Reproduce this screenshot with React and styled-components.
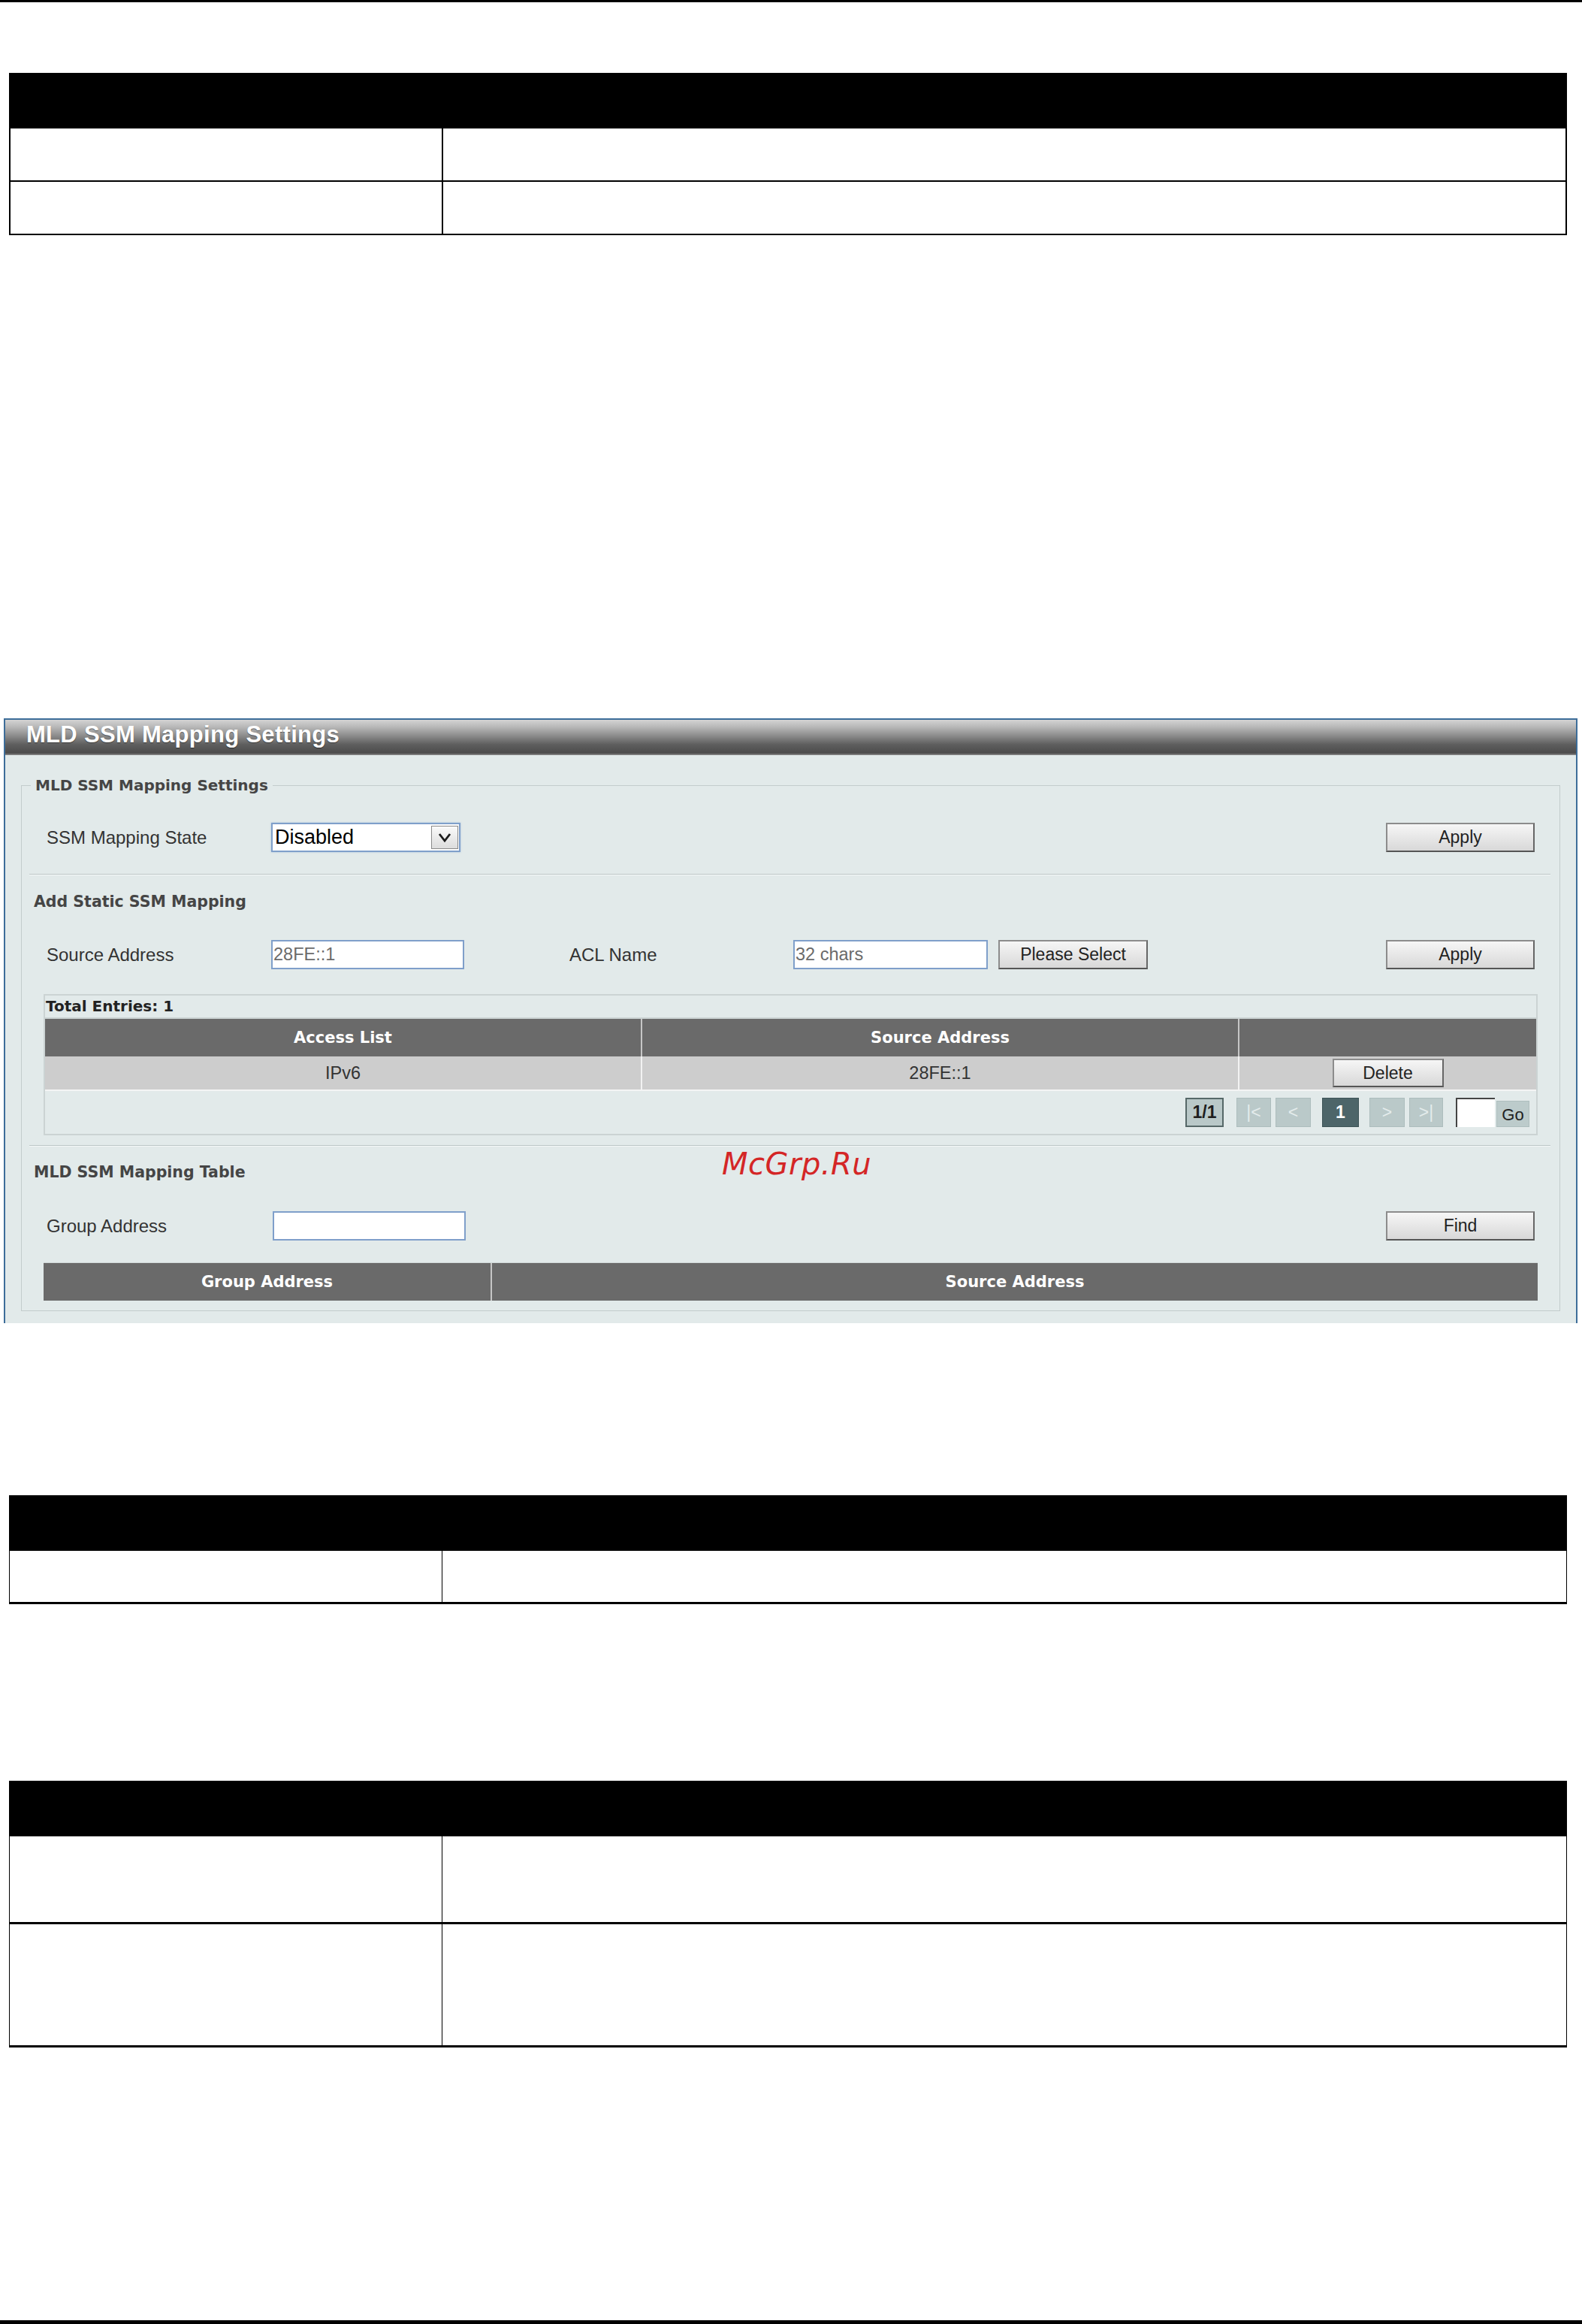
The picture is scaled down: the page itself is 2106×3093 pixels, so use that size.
import React from "react";
import styled, { createGlobalStyle } from "styled-components";

const GlobalStyle = createGlobalStyle`
  * { box-sizing: border-box; }
  html, body { margin: 0; padding: 0; background: #fff; }
  body { font-family: "Liberation Sans", Arial, sans-serif; }
`;

const Page = styled.div`
  position: relative;
  width: 2106px;
  height: 3093px;
  overflow: hidden;
  background: #fff;
`;

const Rule = styled.div`
  height: ${(p) => p.$h}px;
  margin-top: ${(p) => p.$top || 0}px;
  background: #000;
`;

/* document tables (black heads, empty rows) */
const DocTable = styled.div`
  margin: ${(p) => p.$top}px 0 0 12px;
  width: 2074px;
`;

const DocHead = styled.div`
  height: 74px;
  background: #000;
`;

const DocRow = styled.div`
  display: grid;
  grid-template-columns: 576px 1fr;
  height: ${(p) => p.$h}px;
  border-style: solid;
  border-color: #000;
  border-width: 0 ${(p) => p.$side}px ${(p) => p.$bottom}px ${(p) => p.$side}px;
`;

const DocCell = styled.div`
  &:first-child {
    border-right: ${(p) => p.$div}px solid #000;
  }
`;

/* web UI panel */
const Panel = styled.section`
  margin: 643px 0 0 5px;
  width: 2095px;
  padding-bottom: 16px;
  background: #e2eaea;
  border: 2px solid #3d6d99;
  border-bottom: none;
`;

const PanelHead = styled.div`
  height: 47px;
  padding-left: 28px;
  background: linear-gradient(
    to bottom,
    #d4d4d4 0%,
    #b8b8b8 20%,
    #8c8c8c 45%,
    #5e5e5e 70%,
    #4c4c4c 94%,
    #8e8e8e 100%
  );
  color: #fff;
  font: bold 31px/40px "Liberation Sans", Arial, sans-serif;
  letter-spacing: 0.3px;
  text-shadow: 0 1px 1px rgba(0, 0, 0, 0.45);
`;

const Group = styled.fieldset`
  margin: 27px 21px 0 21px;
  padding: 0 0 13px;
  border: 1px solid #c3cccc;
  min-width: 0;
`;

const Legend = styled.legend`
  margin-left: 12px;
  padding: 0 6px;
  font: bold 20px/26px "DejaVu Sans", Verdana, sans-serif;
  color: #454545;
`;

const Separator = styled.div`
  height: 2px;
  margin: ${(p) => p.$top}px 12px 0 10px;
  border-top: 1px solid #bcc6c6;
  border-bottom: 1px solid #f5f8f8;
`;

const SectionTitle = styled.div`
  margin-top: ${(p) => p.$top}px;
  padding-left: 16px;
  font: bold 20.5px/26px "DejaVu Sans", Verdana, sans-serif;
  color: #454545;
`;

const FormRow = styled.div`
  display: flex;
  align-items: center;
  height: 39px;
  margin-top: ${(p) => p.$top}px;
  padding: 0 33px;
`;

const Label = styled.span`
  flex: none;
  width: ${(p) => p.$w}px;
  margin-left: ${(p) => p.$ml || 0}px;
  font-size: 24px;
  color: #333;
`;

const Spacer = styled.div`
  flex: 1;
`;

const TextInput = styled.input`
  flex: none;
  width: ${(p) => p.$w}px;
  height: 39px;
  padding: 0 1px;
  border: 2px solid #7f9fca;
  background: #fff;
  font: 23.5px "Liberation Sans", Arial, sans-serif;
  color: #6b6b6b;
  outline: none;
`;

const SelectBox = styled.div`
  flex: none;
  display: flex;
  align-items: center;
  width: 252px;
  height: 39px;
  padding-left: 3px;
  border: 2px solid #7f9fca;
  box-shadow: 0 0 2px rgba(120, 160, 210, 0.6);
  background: #fff;
  font-size: 27px;
  color: #000;
`;

const SelectText = styled.span`
  flex: 1;
`;

const ArrowBox = styled.span`
  display: flex;
  align-items: center;
  justify-content: center;
  width: 36px;
  height: 31px;
  margin-right: 1px;
  border: 1px solid #8a8a8a;
  background: linear-gradient(#fafafa, #dcdcdc);
`;

const Button = styled.button`
  flex: none;
  width: ${(p) => p.$w}px;
  height: ${(p) => p.$h || 39}px;
  margin-left: ${(p) => p.$ml || 0}px;
  padding: 0;
  border: 2px solid;
  border-color: #8c8c8c #666 #555 #8c8c8c;
  background: linear-gradient(#f6f6f6, #d8d8d8);
  font: 23px "Liberation Sans", Arial, sans-serif;
  color: #222;
`;

/* entries table */
const EntriesBox = styled.div`
  display: flex;
  flex-direction: column;
  height: 188px;
  margin: 33px 29px 0;
  border: 2px solid #cbd3d3;
`;

const TotalBar = styled.div`
  height: 31px;
  padding-left: 1px;
  border-bottom: 2px solid #cbd3d3;
  font: bold 20px/29px "DejaVu Sans", Verdana, sans-serif;
  color: #222;
`;

const GridRow = styled.div`
  display: grid;
  grid-template-columns: ${(p) => p.$cols};
  height: ${(p) => p.$h}px;
  background: ${(p) => p.$bg};
  border-bottom: ${(p) => (p.$line ? `2px solid ${p.$line}` : "none")};
`;

const HeadCell = styled.div`
  display: flex;
  align-items: center;
  justify-content: center;
  color: #fff;
  font: bold 21px "DejaVu Sans", Verdana, sans-serif;
  border-right: 2px solid #c6c6c6;
  &:last-child {
    border-right: none;
  }
`;

const DataCell = styled.div`
  display: flex;
  align-items: center;
  justify-content: center;
  font-size: 23.5px;
  color: #333;
  border-right: 2px solid #f2f2f2;
  &:last-child {
    border-right: none;
  }
`;

const Pager = styled.div`
  flex: 1;
  display: flex;
  align-items: center;
  justify-content: flex-end;
  padding-right: 9px;
`;

const pagerLook = {
  info: "background:#b9c8c8;border:2px solid #566868;color:#1e1e1e;font-weight:bold;",
  off: "background:#bac9c9;border:1px solid #adbdbd;color:#e4ecec;",
  on: "background:#4d6569;border:1px solid #3e5457;color:#fff;font-weight:bold;",
};

const PageBox = styled.div`
  flex: none;
  display: flex;
  align-items: center;
  justify-content: center;
  width: ${(p) => p.$w}px;
  height: 39px;
  margin-left: ${(p) => p.$ml || 0}px;
  font-size: 23px;
  ${(p) => pagerLook[p.$kind]}
`;

const PageInput = styled.div`
  flex: none;
  width: 52px;
  height: 39px;
  margin-left: 17px;
  background: #fff;
  border-top: 2px solid #444;
  border-left: 2px solid #444;
`;

const GoButton = styled.div`
  flex: none;
  display: flex;
  align-items: flex-end;
  justify-content: center;
  width: 44px;
  height: 35px;
  margin: 4px 0 0 2px;
  padding-bottom: 2px;
  background: #bccbcb;
  border: 1px solid #aebebe;
  font-size: 22px;
  color: #222;
`;

const ResultHead = styled(GridRow)`
  margin: 29px 29px 0;
  border-top: 1px solid #d2d9d9;
`;

const Watermark = styled.div`
  position: absolute;
  left: 961px;
  top: 1526px;
  font: italic 40px "DejaVu Sans", Verdana, sans-serif;
  letter-spacing: 0.5px;
  color: #d42626;
`;

const Chevron = () => (
  <svg width="18" height="13" viewBox="0 0 18 13">
    <path d="M2 2 L9 11 L16 2" fill="none" stroke="#1a1a1a" strokeWidth="2.8" />
  </svg>
);

const DocumentTable = ({ top, rows, side, bottom, div }) => (
  <DocTable $top={top}>
    <DocHead />
    {rows.map((h, i) => (
      <DocRow key={i} $h={h} $side={side} $bottom={bottom}>
        <DocCell $div={div} />
        <DocCell />
      </DocRow>
    ))}
  </DocTable>
);

const App = () => {
  return (
    <Page>
      <GlobalStyle />
      <Rule $h={3} />
      <DocumentTable top={94} rows={[71, 71]} side={2} bottom={2} div={2} />

      <Panel>
        <PanelHead>MLD SSM Mapping Settings</PanelHead>
        <Group>
          <Legend>MLD SSM Mapping Settings</Legend>

          <FormRow $top={37}>
            <Label $w={299}>SSM Mapping State</Label>
            <SelectBox>
              <SelectText>Disabled</SelectText>
              <ArrowBox>
                <Chevron />
              </ArrowBox>
            </SelectBox>
            <Spacer />
            <Button $w={198}>Apply</Button>
          </FormRow>

          <Separator $top={29} />
          <SectionTitle $top={22}>Add Static SSM Mapping</SectionTitle>

          <FormRow $top={38}>
            <Label $w={299}>Source Address</Label>
            <TextInput $w={257} defaultValue="28FE::1" />
            <Label $w={298} $ml={140}>
              ACL Name
            </Label>
            <TextInput $w={259} defaultValue="32 chars" />
            <Button $w={199} $ml={14}>
              Please Select
            </Button>
            <Spacer />
            <Button $w={198}>Apply</Button>
          </FormRow>

          <EntriesBox>
            <TotalBar>Total Entries: 1</TotalBar>
            <GridRow $cols="795px 795px 1fr" $h={50} $bg="#6a6a6a">
              <HeadCell>Access List</HeadCell>
              <HeadCell>Source Address</HeadCell>
              <HeadCell />
            </GridRow>
            <GridRow $cols="795px 795px 1fr" $h={46} $bg="#cdcdcd" $line="#f4f4f4">
              <DataCell>IPv6</DataCell>
              <DataCell>28FE::1</DataCell>
              <DataCell>
                <Button $w={148} $h={38}>
                  Delete
                </Button>
              </DataCell>
            </GridRow>
            <Pager>
              <PageBox $kind="info" $w={51}>
                1/1
              </PageBox>
              <PageBox $kind="off" $w={46} $ml={17}>
                |&lt;
              </PageBox>
              <PageBox $kind="off" $w={47} $ml={6}>
                &lt;
              </PageBox>
              <PageBox $kind="on" $w={49} $ml={15}>
                1
              </PageBox>
              <PageBox $kind="off" $w={47} $ml={14}>
                &gt;
              </PageBox>
              <PageBox $kind="off" $w={45} $ml={6}>
                &gt;|
              </PageBox>
              <PageInput />
              <GoButton>Go</GoButton>
            </Pager>
          </EntriesBox>

          <Separator $top={13} />
          <SectionTitle $top={21}>MLD SSM Mapping Table</SectionTitle>

          <FormRow $top={39}>
            <Label $w={301}>Group Address</Label>
            <TextInput $w={257} defaultValue="" />
            <Spacer />
            <Button $w={198}>Find</Button>
          </FormRow>

          <ResultHead $cols="597px 1fr" $h={51} $bg="#6a6a6a">
            <HeadCell>Group Address</HeadCell>
            <HeadCell>Source Address</HeadCell>
          </ResultHead>
        </Group>
      </Panel>

      <DocumentTable top={229} rows={[71]} side={1} bottom={3} div={1} />
      <DocumentTable top={235} rows={[117, 164]} side={1} bottom={3} div={1} />
      <Rule $h={5} $top={363} />

      <Watermark>McGrp.Ru</Watermark>
    </Page>
  );
};

export default App;
